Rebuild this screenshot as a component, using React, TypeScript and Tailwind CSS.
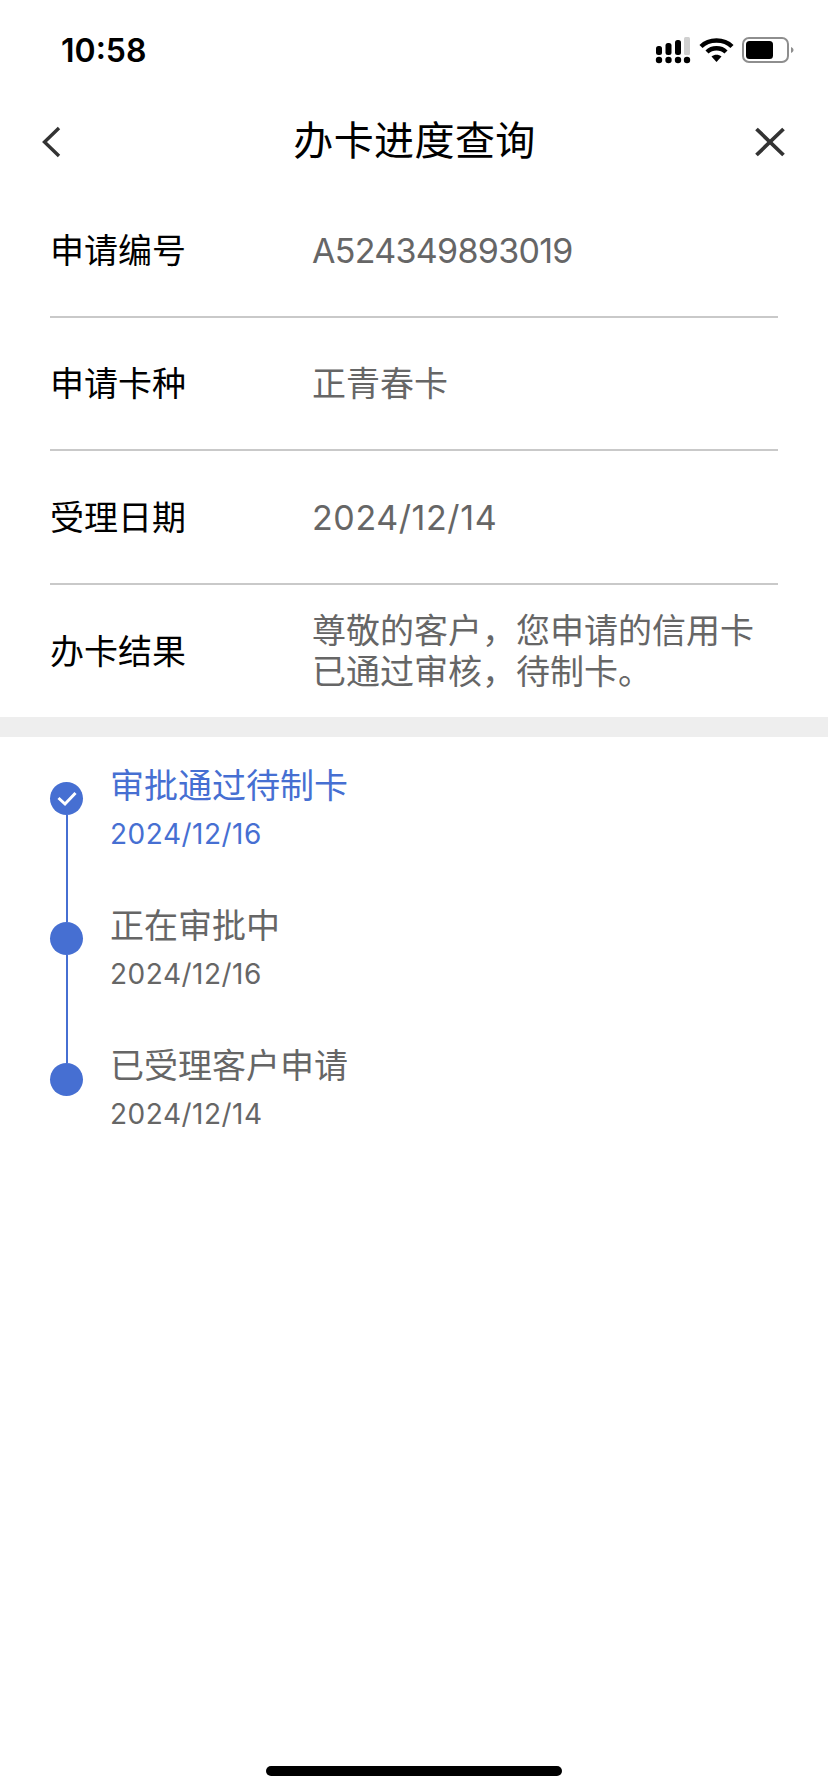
import React from 'react';

const FONT = 'font-["Inter","Noto_Sans_CJK_SC",sans-serif]';

const rows = [
  { label: '申请编号', value: 'A524349893019', valueClass: 'tracking-[-0.7px]' },
  { label: '申请卡种', value: '正青春卡', valueClass: '' },
  { label: '受理日期', value: '2024/12/14', valueClass: 'tracking-[0.6px]' },
];

const steps = [
  { title: '审批通过待制卡', date: '2024/12/16', active: true },
  { title: '正在审批中', date: '2024/12/16', active: false },
  { title: '已受理客户申请', date: '2024/12/14', active: false },
];

const StatusIcons = () => (
  <svg width="142" height="28" viewBox="0 0 142 28" className="block">
    {/* signal */}
    <g fill="#000">
      <rect x="1" y="10" width="6" height="9" rx="2.5" />
      <rect x="10.5" y="7" width="6" height="12" rx="2.5" />
      <rect x="20" y="4" width="6" height="15" rx="2.5" />
      <circle cx="4" cy="24" r="3.2" />
      <circle cx="13.5" cy="24" r="3.2" />
      <circle cx="23" cy="24" r="3.2" />
      <circle cx="32" cy="24" r="3.2" />
    </g>
    <rect x="29" y="1" width="6" height="18" rx="1.5" fill="#d0d0d0" />
    {/* wifi */}
    <g fill="none" stroke="#000" strokeWidth="4.4">
      <path d="M46 10.5 C54 2.5 69 2.5 77 10.5" />
      <path d="M52 16 C57 11 66 11 71 16" />
    </g>
    <path d="M56.5 20.5 C59.5 18 63.5 18 66.5 20.5 L61.5 26 Z" fill="#000" />
    {/* battery */}
    <rect x="88" y="2" width="45" height="24" rx="6" fill="none" stroke="#8e8e8e" strokeWidth="2" />
    <rect x="91" y="5" width="27" height="18" rx="3.5" fill="#000" />
    <path d="M136 11 C138 12 138.5 13 138.5 14 C138.5 15 138 16 136 17 Z" fill="#8e8e8e" />
  </svg>
);

export default function App() {
  return (
    <div className={`${FONT} relative flex h-[1792px] w-[828px] flex-col overflow-hidden bg-white`}>
      {/* status bar */}
      <div className="flex h-[100px] items-start justify-between pl-[61px] pr-[31px] pt-[30px]">
        <span className="text-[32px] leading-[42px] font-semibold text-black">10:58</span>
        <div className="pt-[6px]">
          <StatusIcons />
        </div>
      </div>

      {/* nav */}
      <div className="grid h-[84px] grid-cols-[1fr_auto_1fr] items-center pl-[41px] pr-[43px]">
        <svg width="20" height="32" viewBox="0 0 20 32" fill="none" stroke="#333" strokeWidth="3.4">
          <path d="M18 2 L3.5 16 L18 30" />
        </svg>
        <h1 className="pb-[2px] pl-[3px] text-[40px] leading-[56px] font-normal tracking-[0.4px] text-black">办卡进度查询</h1>
        <svg className="justify-self-end" width="30" height="30" viewBox="0 0 30 30" fill="none" stroke="#333" strokeWidth="3.8">
          <path d="M1.5 2 L28.5 28 M28.5 2 L1.5 28" />
        </svg>
      </div>

      {/* info rows */}
      <div className="mx-[50px] flex flex-col">
        {rows.map((row) => (
          <div key={row.label} className="flex h-[133.5px] items-center border-b-2 border-[#c9c9c9] pt-[2px]">
            <span className="w-[262px] text-[34px] leading-[44px] text-black">{row.label}</span>
            <span className={`text-[34px] leading-[44px] text-[#666] ${row.valueClass}`}>{row.value}</span>
          </div>
        ))}
        <div className="flex h-[132px] items-center">
          <span className="w-[262px] pt-[2px] text-[34px] leading-[44px] text-black">办卡结果</span>
          <p className="w-[450px] text-[34px] leading-[41px] text-[#666]">尊敬的客户，您申请的信用卡已通过审核，待制卡。</p>
        </div>
      </div>

      <div className="h-[20px] bg-[#eeeeee]" />

      {/* timeline */}
      <div className="flex pl-[50px] pt-[24px]">
        <div className="mr-[27px] mt-[21px] flex w-[33px] flex-col items-center">
          <div className="flex h-[33px] w-[33px] items-center justify-center rounded-full bg-[#466fd2]">
            <svg width="22" height="17" viewBox="0 0 22 17" fill="none" stroke="#fff" strokeWidth="3">
              <path d="M2.5 8 L9 14 L19.5 3" />
            </svg>
          </div>
          <div className="h-[107.5px] w-[2px] bg-[#466fd2]" />
          <div className="h-[33px] w-[33px] rounded-full bg-[#466fd2]" />
          <div className="h-[107.5px] w-[2px] bg-[#466fd2]" />
          <div className="h-[33px] w-[33px] rounded-full bg-[#466fd2]" />
        </div>
        <div className="flex flex-col">
          {steps.map((step) => (
            <div key={step.title} className={`h-[140px] ${step.active ? 'text-[#466fd2]' : 'text-[#666]'}`}>
              <div className="text-[34px] leading-[50px]">{step.title}</div>
              <div className="text-[28px] leading-[47px] tracking-[0.5px]">{step.date}</div>
            </div>
          ))}
        </div>
      </div>

      {/* home indicator */}
      <div className="mt-auto flex justify-center pb-[16px]">
        <div className="h-[10px] w-[296px] rounded-full bg-black" />
      </div>
    </div>
  );
}
